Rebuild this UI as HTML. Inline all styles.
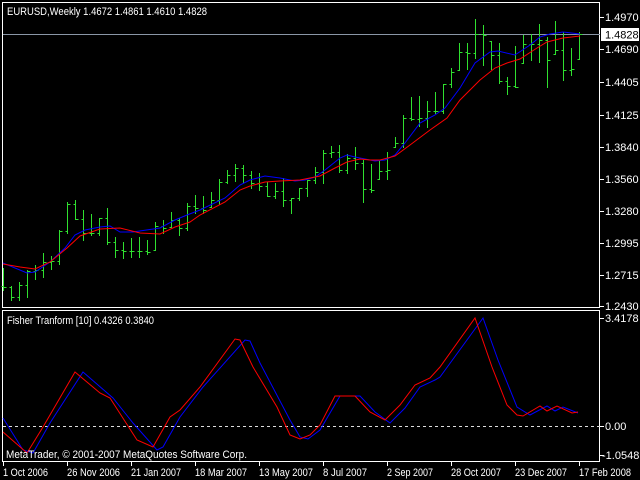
<!DOCTYPE html>
<html><head><meta charset="utf-8"><style>
html,body{margin:0;padding:0;background:#000;width:640px;height:480px;overflow:hidden}
svg{display:block}
text{font-family:"Liberation Sans",sans-serif;font-size:11px;fill:#fff}
</style></head><body>
<svg id="s" width="640" height="480" xmlns="http://www.w3.org/2000/svg" shape-rendering="crispEdges">
<rect width="640" height="480" fill="#000"/>
<rect x="2.5" y="2.5" width="597" height="305" fill="none" stroke="#fff"/>
<rect x="2.5" y="310.5" width="597" height="151" fill="none" stroke="#fff"/>
<line x1="3" y1="34.5" x2="600" y2="34.5" stroke="#8a96a6"/>
<g id="bars" stroke="#2fe02f"></g>
<polyline fill="none" stroke="#0000ff" shape-rendering="auto" points="3,263 27,273 35,272 50,262 65,248 75,235 85,230 100,227 110,226 120,232 133,232 160,228 175,220 187,215 200,210 225,198 240,185 250,180 265,176 280,178 295,181 305,180 315,177 325,170 340,158 347,155 355,157 365,159 375,161 385,160 395,155 405,143 420,123 435,115 445,108 460,88 475,63 490,52 498,51 515,55 530,45 540,37 550,34 563,32 580,34"/>
<polyline fill="none" stroke="#ff0000" shape-rendering="auto" points="3,264 20,267 35,269 50,262 67,248 80,236 100,229 120,228 140,233 160,234 175,227 190,222 200,215 225,202 240,190 250,186 265,182 280,181 300,180 320,176 335,168 347,162 360,159 370,160 380,160 395,156 410,145 430,130 447,118 460,100 480,80 495,68 507,63 520,59 537,48 547,42 563,38 580,36"/>
<line x1="3" y1="426.5" x2="600" y2="426.5" stroke="#ddd" stroke-dasharray="3,3"/>
<polyline fill="none" stroke="#0000ff" shape-rendering="auto" points="3,418 23,450 33,453 50,423 83,372 113,398 133,423 157,450 163,447 180,417 203,387 245,340 250,341 260,363 290,420 300,437 308,439 320,430 340,396 360,396 375,412 390,423 405,408 420,387 435,380 440,377 483,318 498,360 517,407 530,415 547,406 555,411 563,407 578,413"/>
<polyline fill="none" stroke="#ff0000" shape-rendering="auto" points="3,432 27,453 43,427 75,372 100,393 110,398 137,440 153,447 170,417 180,410 200,387 235,339 240,340 253,367 277,407 290,435 300,439 310,435 320,425 335,396 355,396 370,412 385,420 400,405 415,385 430,378 440,367 475,318 492,367 507,405 517,415 523,416 540,406 547,411 557,406 572,413 578,412"/>
<text x="7" y="15" textLength="200" lengthAdjust="spacingAndGlyphs">EURUSD,Weekly  1.4672 1.4861 1.4610 1.4828</text>
<text x="7" y="324" textLength="147" lengthAdjust="spacingAndGlyphs">Fisher Tranform [10] 0.4326 0.3840</text>
<text x="6" y="458" textLength="241" lengthAdjust="spacingAndGlyphs">MetaTrader, © 2001-2007 MetaQuotes Software Corp.</text>
<g id="ax"></g>
<rect x="601" y="28" width="38" height="13" fill="#fff"/>
<text x="605" y="38.5" style="fill:#000">1.4828</text>
</svg>
<script>
var NS="http://www.w3.org/2000/svg";
function el(p,n,a,t){var e=document.createElementNS(NS,n);for(var k in a)e.setAttribute(k,a[k]);if(t)e.textContent=t;p.appendChild(e);return e;}
var d=[[268,290,287],[286,300,297],[282,300,285],[270,297,271],[265,279,270],[253,277,262],[256,269,261],[230,264,231],[202,233,204],[200,219,219],[210,240,233],[214,235,233],[218,235,218],[208,244,242],[237,257,250],[242,258,251],[238,257,251],[237,257,251],[240,254,252],[222,250,226],[220,233,228],[212,227,220],[218,235,228],[203,230,206],[195,213,208],[196,213,210],[192,207,200],[179,204,182],[170,183,175],[164,181,168],[165,182,175],[171,188,183],[173,190,186],[182,196,196],[183,198,191],[178,206,200],[198,213,198],[188,200,188],[180,196,180],[167,183,172],[150,183,153],[146,157,152],[145,172,170],[154,173,158],[147,169,163],[160,202,189],[164,192,190],[160,179,171],[152,179,170],[137,147,143],[115,147,118],[97,120,119],[96,126,118],[101,127,111],[92,113,111],[84,113,84],[68,87,72],[43,70,52],[43,69,53],[19,58,34],[25,65,35],[41,69,55],[43,83,81],[77,94,86],[46,87,87],[35,63,44],[34,60,44],[24,62,40],[37,87,60],[21,54,50],[32,80,70],[48,75,69],[32,59,34]];
var g=document.getElementById('bars'),prev=d[0][1]-4;
d.forEach(function(b,i){var x=3+8*i+0.5,o=Math.min(Math.max(prev,b[0]),b[1]);
el(g,'line',{x1:x,y1:b[0],x2:x,y2:b[1]+1});
el(g,'line',{x1:x-2,y1:o+0.5,x2:x,y2:o+0.5});
el(g,'line',{x1:x,y1:b[2]+0.5,x2:x+3,y2:b[2]+0.5});prev=b[2];});
var ax=document.getElementById('ax');
var pl=[["1.4970",17],["1.4690",49],["1.4405",82],["1.4125",115],["1.3840",147],["1.3560",179],["1.3280",211],["1.2995",243],["1.2715",275],["1.2430",306],["3.4178",318],["0.00",426],["-1.0548",455]];
pl.forEach(function(p){el(ax,'line',{x1:600,y1:p[1]+0.5,x2:604,y2:p[1]+0.5,stroke:'#fff'});el(ax,'text',{x:p[0][0]=='-'?602:605,y:p[1]+4},p[0]);});
var tl=[["1 Oct 2006",45],["26 Nov 2006",53],["21 Jan 2007",50],["18 Mar 2007",52],["13 May 2007",54],["8 Jul 2007",44],["2 Sep 2007",46],["28 Oct 2007",50],["23 Dec 2007",52],["17 Feb 2008",52]];
tl.forEach(function(t,i){var x=3+64*i;el(ax,'line',{x1:x+0.5,y1:462,x2:x+0.5,y2:466,stroke:'#fff'});el(ax,'text',{x:x,y:476,textLength:t[1],lengthAdjust:'spacingAndGlyphs'},t[0]);});
</script>
</body></html>
